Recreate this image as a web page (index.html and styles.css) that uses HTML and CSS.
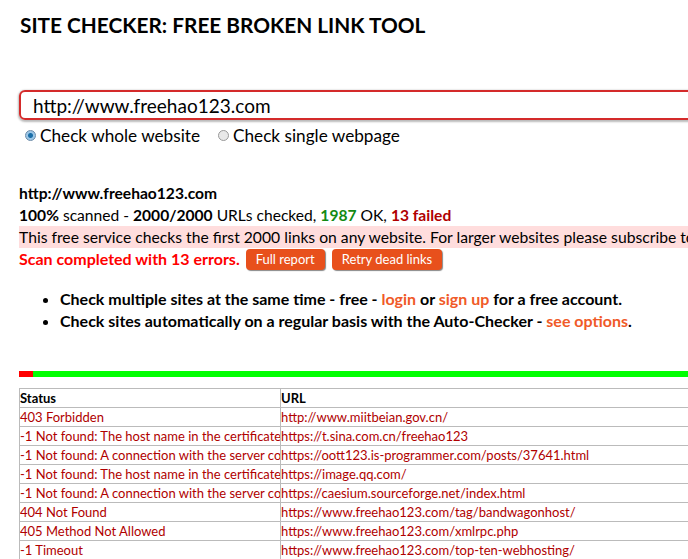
FILE: index.html
```html
<!DOCTYPE html>
<html>
<head>
<meta charset="utf-8">
<link rel="stylesheet" href="styles.css">
</head>
<body>
<div class="page">
  <h1 class="title">SITE CHECKER: FREE BROKEN LINK TOOL</h1>
  <div class="urlbox"><span class="urltext">http://www.freehao123.com</span></div>
  <div class="radios">
    <label class="radio"><span class="dot on"></span>Check whole website</label>
    <label class="radio"><span class="dot"></span>Check single webpage</label>
  </div>
  <div class="result">
    <div class="line b">http://www.freehao123.com</div>
    <div class="line"><b>100%</b> scanned - <b>2000/2000</b> URLs checked, <b class="ok">1987</b> OK, <b class="fail">13 failed</b></div>
    <div class="line notice">This free service checks the first 2000 links on any website. For larger websites please subscribe to the Auto-Checker.</div>
    <div class="line done"><span class="errs">Scan completed with 13 errors.</span><span class="btn">Full report</span><span class="btn">Retry dead links</span></div>
  </div>
  <ul class="bullets">
    <li>Check multiple sites at the same time - free - <span class="lnk">login</span> or <span class="lnk">sign up</span> for a free account.</li>
    <li>Check sites automatically on a regular basis with the Auto-Checker - <span class="lnk">see options</span>.</li>
  </ul>
  <div class="progress"><div class="bad"></div><div class="good"></div></div>
  <table class="grid">
    <tr><th class="c1">Status</th><th>URL</th></tr>
    <tr><td class="c1">403 Forbidden</td><td>http://www.miitbeian.gov.cn/</td></tr>
    <tr><td class="c1">-1 Not found: The host name in the certificate is invalid</td><td>https://t.sina.com.cn/freehao123</td></tr>
    <tr><td class="c1">-1 Not found: A connection with the server could not be established</td><td>https://oott123.is-programmer.com/posts/37641.html</td></tr>
    <tr><td class="c1">-1 Not found: The host name in the certificate is invalid</td><td>https://image.qq.com/</td></tr>
    <tr><td class="c1">-1 Not found: A connection with the server could not be established</td><td>https://caesium.sourceforge.net/index.html</td></tr>
    <tr><td class="c1">404 Not Found</td><td>https://www.freehao123.com/tag/bandwagonhost/</td></tr>
    <tr><td class="c1">405 Method Not Allowed</td><td>https://www.freehao123.com/xmlrpc.php</td></tr>
    <tr><td class="c1">-1 Timeout</td><td>https://www.freehao123.com/top-ten-webhosting/</td></tr>
    <tr><td class="c1">404 Not Found</td><td>https://www.freehao123.com/tag/hostgator/</td></tr>
  </table>
</div>
</body>
</html>
```
FILE: styles.css
```css
html { overflow: hidden; }
body {
  margin: 0;
  font-family: Lato, "Open Sans", sans-serif;
  color: #000;
  background: #fff;
}
.page {
  width: 900px;
  padding: 0 0 0 19px;
}
.title {
  margin: 0;
  padding-top: 11px;
  font-size: 20.8px;
  font-weight: bold;
  line-height: 28px;
  height: 79px;
  padding-left: 1px;
}
.urlbox {
  height: 26px;
  border: 2px solid #d42a2a;
  border-radius: 6px;
  box-shadow: 0 1px 2px 1px #bbb;
  display: flex;
  align-items: center;
  padding-left: 12px;
}
.urltext { font-size: 19px; }
.radios {
  display: flex;
  gap: 18px;
  padding: 2px 0 0 6px;
  height: 27px;
  font-size: 17.2px;
  align-items: center;
}
.radio { display: flex; align-items: center; gap: 4px; }
.dot {
  width: 9px; height: 9px;
  border: 1px solid #999;
  border-radius: 50%;
  background: #e8e8e8;
  display: inline-block;
}
.dot.on {
  background: radial-gradient(circle, #1a6ea8 0 2px, #9cc6e6 3px);
  border-color: #6a8aa8;
}
.result { margin-top: 33px; font-size: 15.6px; }
.line { height: 22px; line-height: 22px; white-space: nowrap; }
.b { font-weight: bold; }
.ok { color: #138a13; }
.fail { color: #b00000; }
.notice { background: #ffdddd; font-size: 15.7px; }
.done { display: flex; align-items: center; }
.errs { color: #f00; font-weight: bold; font-size: 16px; margin-right: 6px; }
.btn {
  background: #e8501c;
  color: #fff;
  font-size: 13px;
  line-height: 21px;
  padding: 0 10px;
  border-radius: 4px;
  box-shadow: 1px 1px 1px #888;
  margin-right: 7px;
}
.bullets {
  margin: 18px 0 0 0;
  padding-left: 41px;
  font-size: 16px;
  font-weight: bold;
}
.bullets li { line-height: 22px; }
.lnk { color: #f05a28; font-weight: bold; }
.progress {
  margin-top: 39px;
  height: 6px;
  display: flex;
}
.bad { width: 14px; background: #f00; }
.good { flex: 1; background: #00ff00; }
.grid {
  margin-top: 11px;
  border-collapse: collapse;
  table-layout: fixed;
  width: 900px;
  font-size: 13px;
}
.grid th, .grid td {
  border: 1px solid #bbb;
  height: 18px;
  padding: 0;
  white-space: nowrap;
  overflow: hidden;
  text-align: left;
  line-height: 18px;
}
.grid th { font-weight: bold; color: #000; }
.grid td { color: #b00000; }
.c1 { width: 260px; }
```
